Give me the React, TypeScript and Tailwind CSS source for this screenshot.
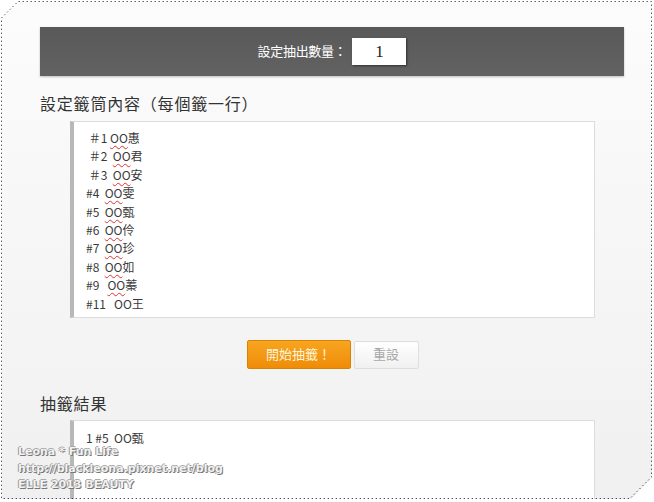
import React from "react";

const lines = [
  " ＃1 OO|惠",
  " ＃2  OO|君",
  " ＃3  OO|安",
  "#4  OO|雯",
  "#5  OO|甄",
  "#6  OO|伶",
  "#7  OO|珍",
  "#8  OO|如",
  "#9   OO|蓁",
  "#11   OO王",
];

function Line({ s }: { s: string }) {
  if (!s.includes("|")) return <div className="whitespace-pre">{s}</div>;
  const [a, b] = s.split("|");
  const idx = a.lastIndexOf("OO");
  const pre = a.slice(0, idx);
  return (
    <div className="whitespace-pre">
      {pre}
      <span className="underline decoration-wavy decoration-[#e03030] decoration-1 underline-offset-2">OO</span>
      {b}
    </div>
  );
}

export default function App() {
  const font = { fontFamily: '"Liberation Sans", "Noto Sans CJK TC", sans-serif' };
  const cjk = { fontFamily: '"Noto Sans CJK TC", sans-serif' };
  return (
    <div className="relative w-[654px] h-[502px] bg-white overflow-hidden" style={font}>
      <div
        className="ml-[2px] mt-[2px] w-[650px] h-[497px] bg-gradient-to-b from-[#fcfcfc] to-[#f0f0f0] pl-[38px] pt-[25px]"
        style={{ clipPath: "polygon(17px 0, 650px 0, 650px 476px, 629px 497px, 0 497px, 0 17px)" }}
      >
        <div className="w-[584px] h-[49px] bg-gradient-to-b from-[#595959] to-[#626262] shadow-[0_1px_2px_rgba(0,0,0,0.25)] flex items-center justify-center gap-[6px]">
          <span className="text-[13px] text-white tracking-[-0.3px]">設定抽出數量：</span>
          <div className="w-[54px] h-[27px] bg-white shadow-[1px_1px_2px_rgba(0,0,0,0.5)] flex items-center justify-center text-[17px] text-[#222]" style={{ fontFamily: '"Liberation Serif", serif' }}>
            1
          </div>
        </div>

        <div className="mt-[15px] text-[16px] leading-[24px] text-[#333] tracking-[0.8px]" style={cjk}>設定籤筒內容（每個籤一行）</div>

        <div className="mt-[6px] ml-[30px] w-[525px] h-[197px] bg-white border border-[#dcdcdc] border-l-[4px] border-l-[#b8b8b8] pl-[12px] pt-[7px] text-[12px] leading-[18.4px] text-[#3a3a3a]" style={cjk}>
          {lines.map((l, i) => (
            <Line key={i} s={l} />
          ))}
        </div>

        <div className="ml-[30px] w-[525px] mt-[22px] flex justify-center gap-[3px]">
          <button className="w-[104px] h-[29px] rounded-[2px] border border-[#d88400] bg-gradient-to-b from-[#f8a51f] to-[#ef8c06] text-[13px] text-[#fff6dc]">
            開始抽籤！
          </button>
          <button className="w-[65px] h-[28px] mt-[1px] rounded-[2px] border border-[#dedede] bg-gradient-to-b from-[#ffffff] to-[#f0f0f0] text-[13px] text-[#a8a8a8]">
            重設
          </button>
        </div>

        <div className="mt-[22px] text-[16px] leading-[24px] text-[#333] tracking-[0.8px]" style={cjk}>抽籤結果</div>

        <div className="mt-[5px] ml-[30px] w-[525px] h-[120px] bg-white border border-[#dcdcdc] border-l-[4px] border-l-[#b8b8b8] pl-[12px] pt-[8px] text-[12px] leading-[18.4px] text-[#3a3a3a]" style={cjk}>
          <div className="whitespace-pre">1 #5  OO甄</div>
        </div>
      </div>

      <div
        className="absolute left-[18px] top-[444px] text-[11px] leading-[16.5px] font-bold text-[#f2f2f2]"
        style={{ fontFamily: '"DejaVu Sans", sans-serif', textShadow: "1px 1px 0 #777, -1px 0 0 #999, 0 -1px 0 #aaa" }}
      >
        <div>Leona * Fun Life</div>
        <div>http://blackleona.pixnet.net/blog</div>
        <div>ELLE 2013 BEAUTY</div>
      </div>

      <svg className="absolute left-0 top-0" width="654" height="502" viewBox="0 0 654 502">
        <polyline
          points="1.5,18 18,1.5 651.5,1.5 651.5,477 630,498.5 1.5,498.5 1.5,18"
          fill="none"
          stroke="#111"
          strokeWidth="1"
          strokeDasharray="1 3"
        />
      </svg>
    </div>
  );
}
